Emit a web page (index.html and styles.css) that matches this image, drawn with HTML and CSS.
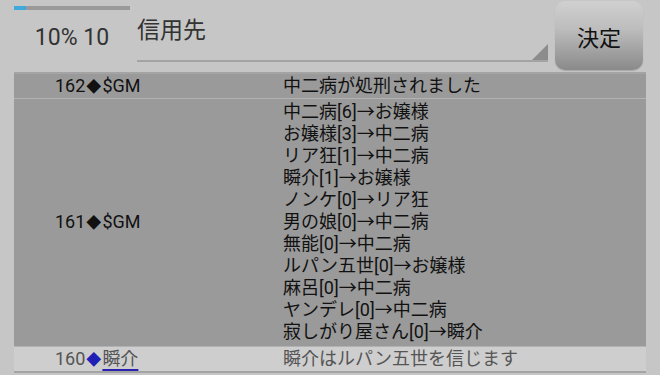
FILE: index.html
```html
<!DOCTYPE html>
<html lang="ja">
<head>
    <meta charset="UTF-8">
    <meta name="viewport" content="width=device-width, initial-scale=1.0">
    <title>投票ログ</title>
    <link rel="stylesheet" href="styles.css">
</head>
<body>
    <div class="top">
        <div class="status">
            <div class="progress"><div class="progress-fill"></div></div>
            <div class="status-text">10% 10</div>
        </div>
        <div class="field">
            <span class="field-text">信用先</span>
            <span class="field-arrow"></span>
        </div>
        <button class="decide">決定</button>
    </div>

    <div class="log">
        <div class="row dark">
            <div class="who">162<span class="mark">◆</span>$GM</div>
            <div class="what">中二病が処刑されました</div>
        </div>
        <div class="row dark">
            <div class="who">161<span class="mark">◆</span>$GM</div>
            <div class="what">
                中二病[6]→お嬢様<br>
                お嬢様[3]→中二病<br>
                リア狂[1]→中二病<br>
                瞬介[1]→お嬢様<br>
                ノンケ[0]→リア狂<br>
                男の娘[0]→中二病<br>
                無能[0]→中二病<br>
                ルパン五世[0]→お嬢様<br>
                麻呂[0]→中二病<br>
                ヤンデレ[0]→中二病<br>
                寂しがり屋さん[0]→瞬介
            </div>
        </div>
        <div class="row light">
            <div class="who">160<span class="mark blue">◆</span><a class="name" href="#">瞬介</a></div>
            <div class="what">瞬介はルパン五世を信じます</div>
        </div>
    </div>
</body>
</html>
```

FILE: styles.css
```css
body {
    margin: 0;
    background-color: #c6c6c6;
    font-family: Roboto, "Noto Sans CJK JP", sans-serif;
    color: #333;
}

/* top bar */
.top {
    display: flex;
    height: 72px;
}

.status {
    width: 116px;
    margin-left: 14px;
    padding-top: 6px;
}

.progress {
    height: 4px;
    background-color: #9a9a9a;
}

.progress-fill {
    width: 12px;
    height: 100%;
    background-color: #3fa9dc;
}

.status-text {
    margin-top: 13px;
    font-size: 23px;
    line-height: 30px;
    text-align: center;
    color: #333;
}

.field {
    position: relative;
    width: 411px;
    height: 60px;
    margin-left: 7px;
    border-bottom: 2px solid #a3a3a3;
}

.field-text {
    display: block;
    padding-top: 16px;
    font-size: 23px;
    line-height: 30px;
    color: #333;
}

.field-arrow {
    position: absolute;
    right: 0;
    bottom: 0;
    width: 0;
    height: 0;
    border-left: 16px solid transparent;
    border-bottom: 16px solid #8c8c8c;
}

.decide {
    width: 88px;
    height: 69px;
    margin: 1px 0 0 7px;
    padding: 0;
    font-family: "Noto Sans CJK JP", sans-serif;
    font-size: 22px;
    color: #111;
    border: none;
    border-radius: 10px;
    background: linear-gradient(#d0d0d0, #bdbdbd 40%, #8a8a8a);
    box-shadow: 0 1px 1px rgba(0,0,0,0.15);
}

/* log table */
.log {
    margin: 0 14px;
    border-top: 2px solid #a4a4a4;
}

.row {
    display: grid;
    grid-template-columns: 260px 1fr;
    align-items: center;
    font-size: 18px;
    line-height: 22px;
}

.row.dark {
    background-color: #9a9a9a;
    color: #111;
    border-bottom: 1px solid #b2b2b2;
}

.row.light {
    background-color: #cecece;
    color: #555;
    border-bottom: 2px solid #a4a4a4;
}

.row .who {
    padding-left: 41px;
}

.row .what {
    padding: 1px 0 1px 9px;
}

.log .row:first-child,
.log .row.light {
    height: 24px;
}

.row.dark:nth-child(2) .what {
    padding: 2px 0 3px 9px;
}

.mark {
    font-size: 15px;
    padding: 0 1px;
}

.mark.blue {
    color: #2020b4;
}

.name {
    color: #555;
    text-decoration: underline;
    text-decoration-color: #2b22b0;
    text-decoration-thickness: 2px;
    text-underline-offset: 4px;
}
```
